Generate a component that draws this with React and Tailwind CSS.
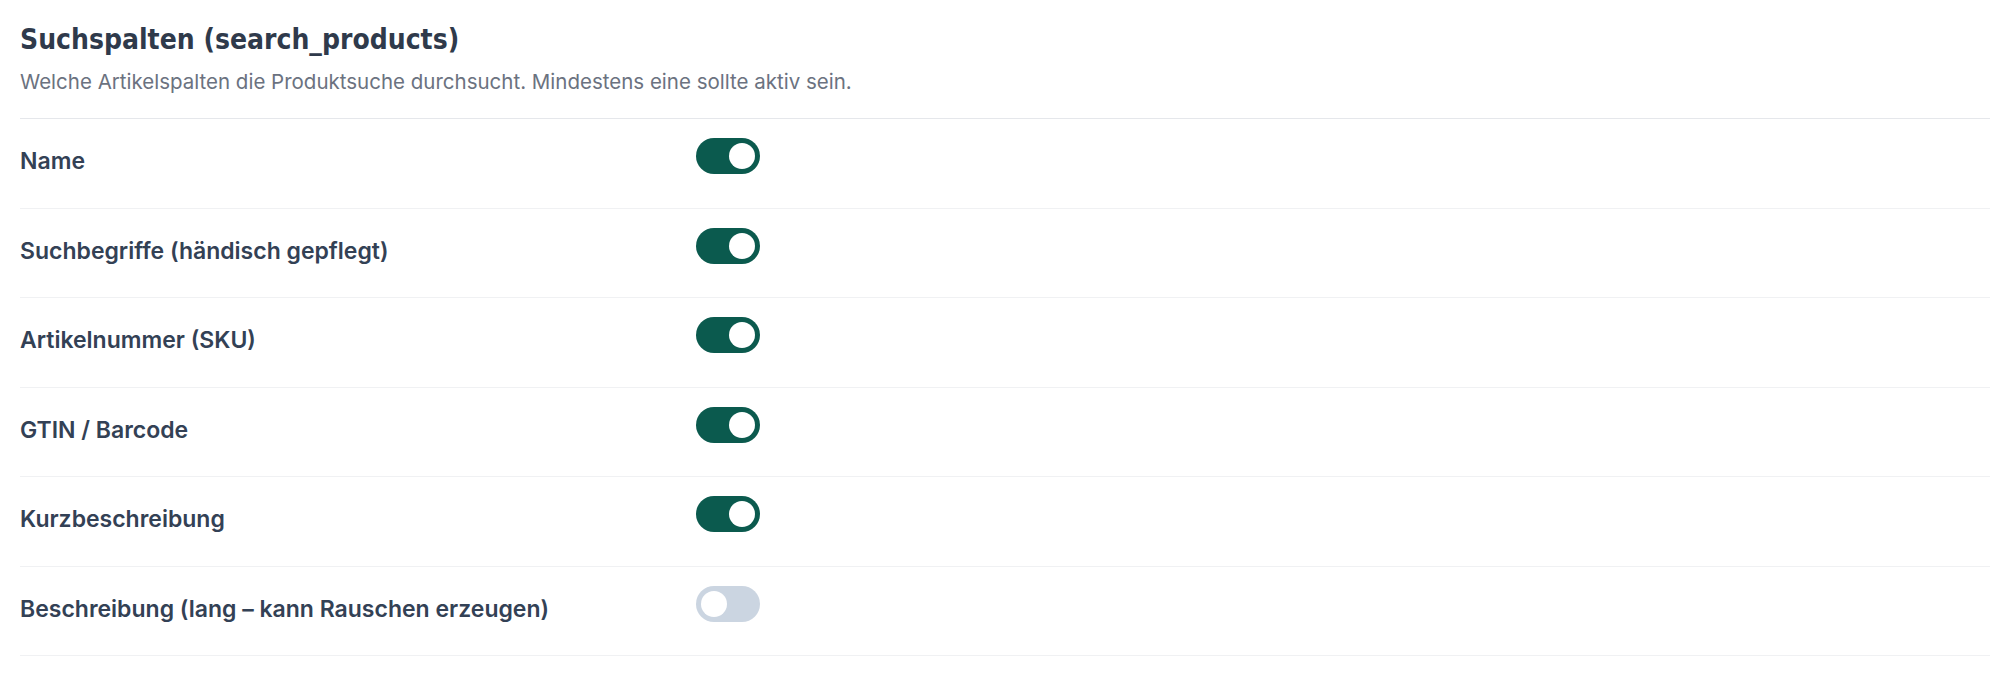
import React, { useState } from "react";

const initialColumns = [
  { key: "name", label: "Name", on: true },
  { key: "search_terms", label: "Suchbegriffe (händisch gepflegt)", on: true },
  { key: "sku", label: "Artikelnummer (SKU)", on: true },
  { key: "gtin", label: "GTIN / Barcode", on: true },
  { key: "short_description", label: "Kurzbeschreibung", on: true },
  { key: "description", label: "Beschreibung (lang – kann Rauschen erzeugen)", on: false },
];

const Toggle = ({ checked, onChange }) => (
  <button
    type="button"
    role="switch"
    aria-checked={checked}
    onClick={onChange}
    className={`mt-[19px] flex h-9 w-16 shrink-0 items-center rounded-full px-[5px] ${
      checked ? "bg-[#0b5a4e] justify-end" : "bg-[#cbd5e1] justify-start"
    }`}
  >
    <span className="block size-[26px] rounded-full bg-white" />
  </button>
);

const App = () => {
  const [columns, setColumns] = useState(initialColumns);

  const toggleColumn = (key) => {
    setColumns((prev) =>
      prev.map((col) => (col.key === key ? { ...col, on: !col.on } : col))
    );
  };

  return (
    <div className="min-h-screen bg-white px-5 font-['Inter',sans-serif]">
      <div className="pt-[22px] pb-[22px]">
        <h2 className="font-['DejaVu_Sans_Condensed','Liberation_Sans_Narrow',sans-serif] text-[28px] font-bold leading-[36px] text-[#2f3a4b]">
          Suchspalten (search_products)
        </h2>
        <p className="mt-[10px] text-[20.5px] leading-[28px] text-[#6b7280]">
          Welche Artikelspalten die Produktsuche durchsucht. Mindestens eine sollte aktiv sein.
        </p>
      </div>

      <div className="border-t border-[#e5e7eb]">
        {columns.map((col) => (
          <div
            key={col.key}
            className="flex h-[89.5px] items-start border-b border-[#f0f1f3]"
          >
            <div className="w-[676px] pt-[28px] text-[23px] font-semibold leading-[28px] text-[#334155]">
              {col.label}
            </div>
            <Toggle checked={col.on} onChange={() => toggleColumn(col.key)} />
          </div>
        ))}
      </div>
    </div>
  );
};

export default App;
